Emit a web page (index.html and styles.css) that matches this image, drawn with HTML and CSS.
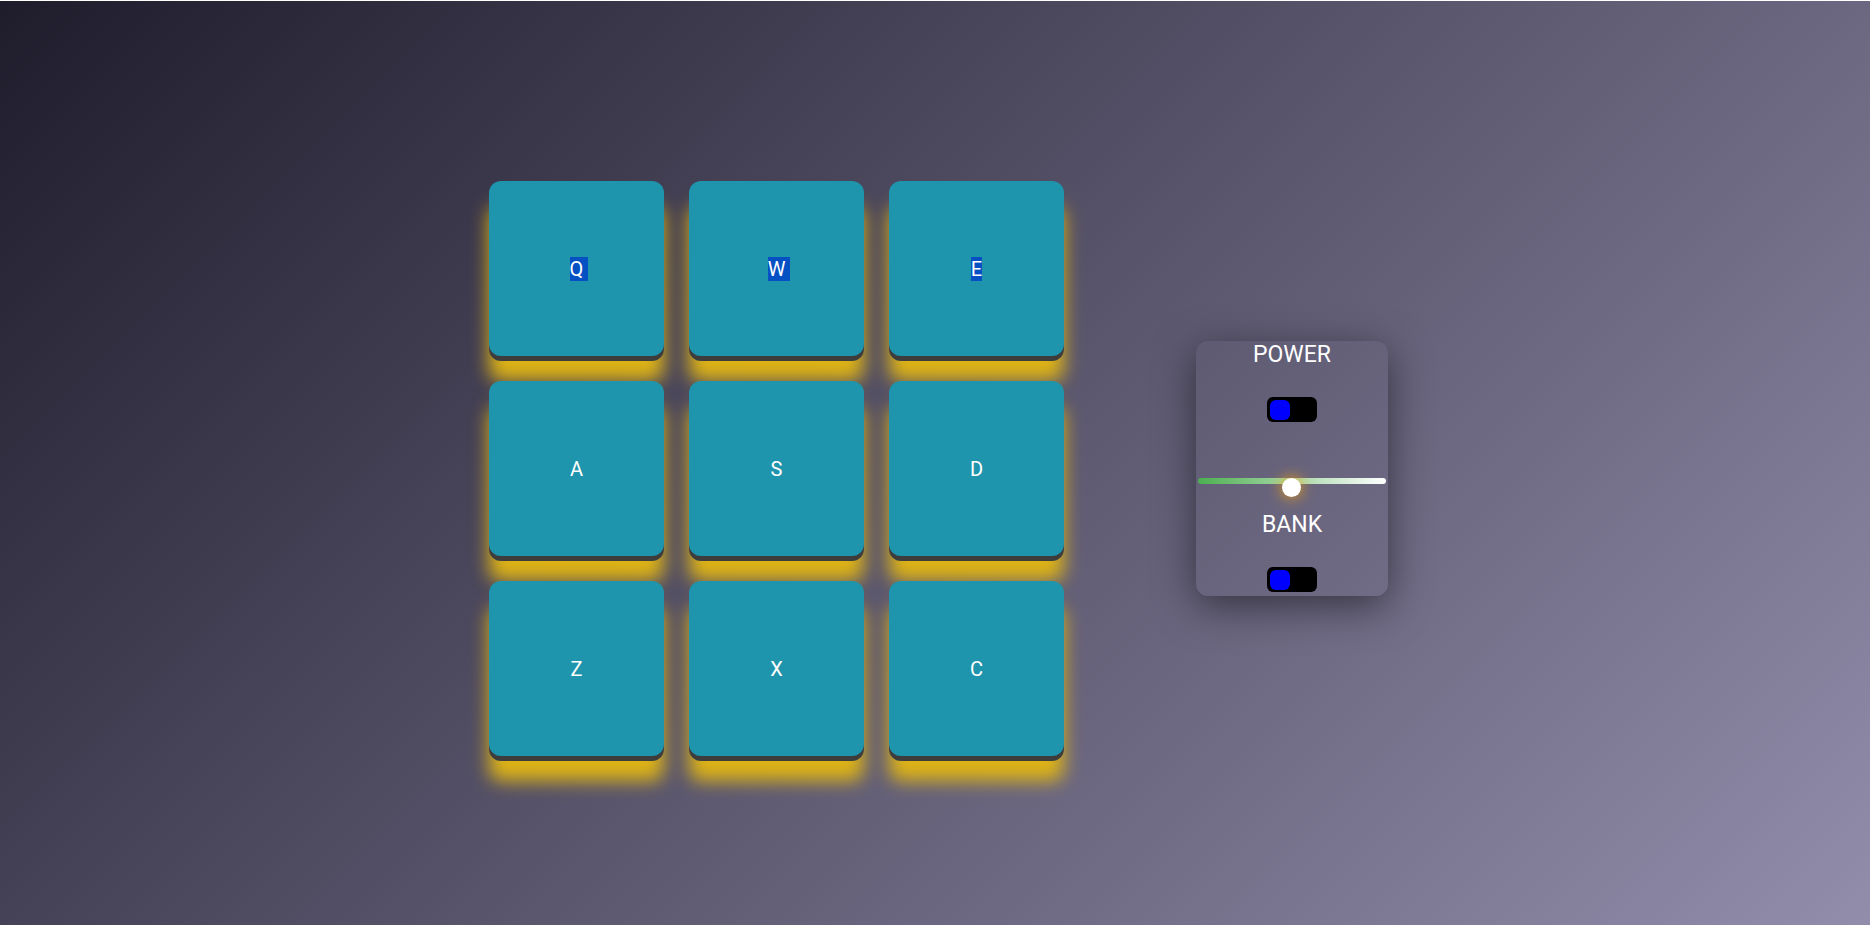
FILE: index.html
```html
<!DOCTYPE html>
<html lang="en">
<head>
<meta charset="utf-8">
<title>Drum Machine</title>
<link rel="stylesheet" href="styles.css">
</head>
<body>
<main class="machine">
  <div class="pads">
    <button class="pad" type="button"><span class="letter picked spaced">Q</span></button>
    <button class="pad" type="button"><span class="letter picked spaced">W</span></button>
    <button class="pad" type="button"><span class="letter picked">E</span></button>
    <button class="pad" type="button">A</button>
    <button class="pad" type="button">S</button>
    <button class="pad" type="button">D</button>
    <button class="pad" type="button">Z</button>
    <button class="pad" type="button">X</button>
    <button class="pad" type="button">C</button>
  </div>
  <section class="controls">
    <label class="caption" for="power">POWER</label>
    <input class="toggle" id="power" type="checkbox">
    <input class="volume" type="range" min="0" max="100" value="49.5" step="0.5" aria-label="Volume">
    <label class="caption" for="bank">BANK</label>
    <input class="toggle" id="bank" type="checkbox">
  </section>
</main>
</body>
</html>
```
FILE: styles.css
```css
* {
  box-sizing: border-box;
}

body {
  margin: 0;
  min-height: 100vh;
  border-top: 1px solid #fff;
  border-right: 2px solid #fff;
  display: flex;
  background: linear-gradient(135deg, #1f1c2c, #928dab);
  color: #fff;
  font-family: Roboto, "Liberation Sans", sans-serif;
}

.machine {
  flex: 1;
  display: flex;
  justify-content: center;
  align-items: center;
  gap: 132px;
  padding-top: 11px;
  padding-left: 7px;
}

.pads {
  display: grid;
  grid-template-columns: repeat(3, 175px);
  grid-auto-rows: 175px;
  gap: 25px;
}

.pad {
  display: flex;
  justify-content: center;
  align-items: center;
  padding: 1px 0 0;
  border: 0;
  border-radius: 12px;
  background: #1f95ad;
  box-shadow: 0 5px 0 #3d3d3d, 0 25px 18px #deb316;
  color: #fff;
  font: 20px/24px Roboto, "Liberation Sans", sans-serif;
}

.picked {
  background: #0550c3;
}

.spaced {
  margin-left: 5px;
  padding-right: 5px;
}

.controls {
  display: flex;
  flex-direction: column;
  align-items: center;
  width: 192px;
  padding-bottom: 4px;
  border-radius: 12px;
  box-shadow: 0 10px 40px rgba(0, 0, 0, 0.5);
}

.caption {
  font-size: 23px;
  line-height: 28px;
}

.toggle {
  appearance: none;
  display: flex;
  align-items: center;
  width: 50px;
  height: 25px;
  margin: 28px 0 0;
  padding-left: 3px;
  border-radius: 6px;
  background: #000;
}

.toggle::before {
  content: "";
  width: 20px;
  height: 20px;
  border-radius: 6px;
  background: #00f;
}

.toggle:checked {
  justify-content: flex-end;
  padding: 0 3px 0 0;
}

.volume {
  appearance: none;
  width: 188px;
  height: 6px;
  margin: 56px 0 27px;
  border-radius: 3px;
  background: linear-gradient(to right, #4caf50, #fff);
}

.volume::-webkit-slider-runnable-track {
  height: 6px;
}

.volume::-webkit-slider-thumb {
  appearance: none;
  width: 19px;
  height: 19px;
  border-radius: 50%;
  background: #fff;
  box-shadow: 0 0 15px #ffa500;
}
```
